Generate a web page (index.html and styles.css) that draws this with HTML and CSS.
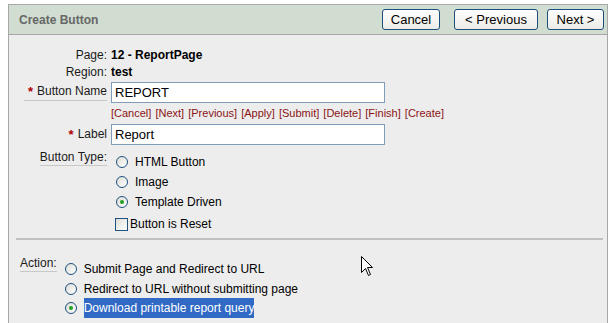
FILE: index.html
```html
<!DOCTYPE html>
<html lang="en">
<head>
  <meta charset="UTF-8">
  <title>Create Button</title>
  <link rel="stylesheet" href="styles.css">
</head>
<body>
  <div class="panel">
    <div class="panel-header">
      <h2 class="panel-title">Create Button</h2>
      <div class="panel-buttons">
        <button class="btn btn-cancel">Cancel</button>
        <button class="btn btn-prev">&lt; Previous</button>
        <button class="btn btn-next">Next &gt;</button>
      </div>
    </div>

    <div class="panel-body">
      <div class="form-grid">
        <div class="row row-info">
          <div class="label">Page:</div>
          <div class="value"><b>12 - ReportPage</b></div>
        </div>
        <div class="row row-info">
          <div class="label">Region:</div>
          <div class="value"><b>test</b></div>
        </div>
        <div class="row row-input">
          <div class="label"><span class="line required"><span class="star">*</span>Button Name</span></div>
          <div class="value"><input type="text" class="text-field" value="REPORT"></div>
        </div>
        <div class="row row-links">
          <div class="label"></div>
          <div class="value links">
            <a href="#">[Cancel]</a> <a href="#">[Next]</a> <a href="#">[Previous]</a> <a href="#">[Apply]</a>
            <a href="#">[Submit]</a> <a href="#">[Delete]</a> <a href="#">[Finish]</a> <a href="#">[Create]</a>
          </div>
        </div>
        <div class="row row-input">
          <div class="label"><span class="star">*</span>Label</div>
          <div class="value"><input type="text" class="text-field" value="Report"></div>
        </div>
        <div class="row row-group">
          <div class="label"><span class="line">Button Type:</span></div>
          <div class="value options">
            <div class="option"><span class="radio"></span>HTML Button</div>
            <div class="option"><span class="radio"></span>Image</div>
            <div class="option"><span class="radio checked"></span>Template Driven</div>
            <div class="option option-check"><span class="checkbox"></span>Button is Reset</div>
          </div>
        </div>
      </div>

      <hr class="separator">

      <div class="action-row">
        <div class="action-label"><span class="line">Action:</span></div>
        <div class="options">
          <div class="option"><span class="radio"></span>Submit Page and Redirect to URL</div>
          <div class="option"><span class="radio"></span>Redirect to URL without submitting page</div>
          <div class="option"><span class="radio checked"></span><span class="selected">Download printable report query</span></div>
        </div>
      </div>
    </div>

    <svg class="cursor" width="13" height="21" viewBox="0 0 13 21">
      <path d="M0.5 0.5 L0.5 16.5 L4.5 12.5 L7.5 19.5 L9.5 18.5 L6.5 11.5 L11.5 11.5 Z" fill="#fff" stroke="#000" stroke-width="1"/>
    </svg>
  </div>
</body>
</html>
```

FILE: styles.css
```css
* {
  margin: 0;
  padding: 0;
  box-sizing: border-box;
}

body {
  font-family: "Liberation Sans", Arial, sans-serif;
  font-size: 12px;
  color: #000;
  background: #fff;
}

.panel {
  position: relative;
  margin: 4px 0 0 8px;
  width: 600px;
  height: 330px;
  border: 1px solid #a8a8a8;
  background: #ededed;
}

.panel-header {
  display: flex;
  justify-content: space-between;
  align-items: center;
  height: 30px;
  padding: 0 3px 0 10px;
  background: #d0ddd0;
  border-bottom: 1px solid #a8a8a8;
}

.panel-title {
  font-size: 12px;
  font-weight: bold;
  color: #666;
}

.panel-buttons {
  display: flex;
  align-items: center;
}

.btn {
  height: 21px;
  font-family: "Liberation Sans", Arial, sans-serif;
  font-size: 13px;
  color: #000;
  background: linear-gradient(#ffffff, #ecebe6);
  border: 1px solid #1c4f7c;
  border-radius: 3px;
  padding: 0;
}

.btn-cancel { width: 58px; margin-right: 14px; }
.btn-prev { width: 84px; margin-right: 9px; }
.btn-next { width: 57px; }

.panel-body {
  padding-top: 11px;
}

.row {
  display: grid;
  grid-template-columns: 98px 1fr;
  column-gap: 4px;
  align-items: center;
}

.row-info { height: 17px; }
.row-input { height: 21px; margin-top: 2px; }
.row-links { height: 18px; margin-top: 1px; }

.label {
  text-align: right;
  color: #1a1a1a;
}

.line {
  display: inline-block;
  border-bottom: 1px solid #c8c8c8;
  padding-bottom: 1px;
}

.line.required {
  padding-left: 4px;
}

.star {
  color: #b00000;
  font-weight: bold;
  margin-right: 4px;
  font-size: 13px;
  vertical-align: -1px;
}

.text-field {
  width: 274px;
  height: 21px;
  padding: 0 3px;
  border: 1px solid #7f9db9;
  background: #fff;
  font-family: "Liberation Sans", Arial, sans-serif;
  font-size: 13px;
  color: #000;
}

.links {
  font-size: 11px;
  word-spacing: 1px;
}

.links a {
  color: #8a1414;
  text-decoration: none;
}

.row-group {
  align-items: start;
  margin-top: 4px;
}

.row-group .label {
  padding-top: 1px;
}

.row-group .options {
  padding-top: 3px;
}

.options {
  display: flex;
  flex-direction: column;
}

.option {
  display: flex;
  align-items: center;
  height: 20px;
}

.option-check {
  height: 22px;
  margin-top: 1px;
}

.radio {
  width: 12px;
  height: 12px;
  margin: 0 7px 0 5px;
  border: 1px solid #1c5180;
  border-radius: 50%;
  background: linear-gradient(135deg, #dcdcd6, #ffffff);
  display: flex;
  align-items: center;
  justify-content: center;
}

.radio.checked::after {
  content: "";
  width: 4px;
  height: 4px;
  border-radius: 50%;
  background: #21a121;
}

.checkbox {
  width: 13px;
  height: 13px;
  margin: 0 2px 0 4px;
  border: 1px solid #1c5180;
  background: linear-gradient(135deg, #dcdcd6, #ffffff);
}

.separator {
  margin: 3px 4px 0 7px;
  border: none;
  height: 2px;
  background: #c0c0c0;
}

.action-row {
  display: flex;
  align-items: flex-start;
  margin-top: 15px;
  padding-left: 11px;
}

.action-row .options {
  padding-top: 4px;
}

.action-row .option:last-child {
  height: 19px;
  margin-top: -1px;
}

.action-label {
  color: #1a1a1a;
  margin-right: 3px;
  padding-top: 1px;
}

.selected {
  background: #316ac5;
  color: #fff;
  line-height: 20px;
}

.cursor {
  position: absolute;
  left: 352px;
  top: 251px;
}
```
